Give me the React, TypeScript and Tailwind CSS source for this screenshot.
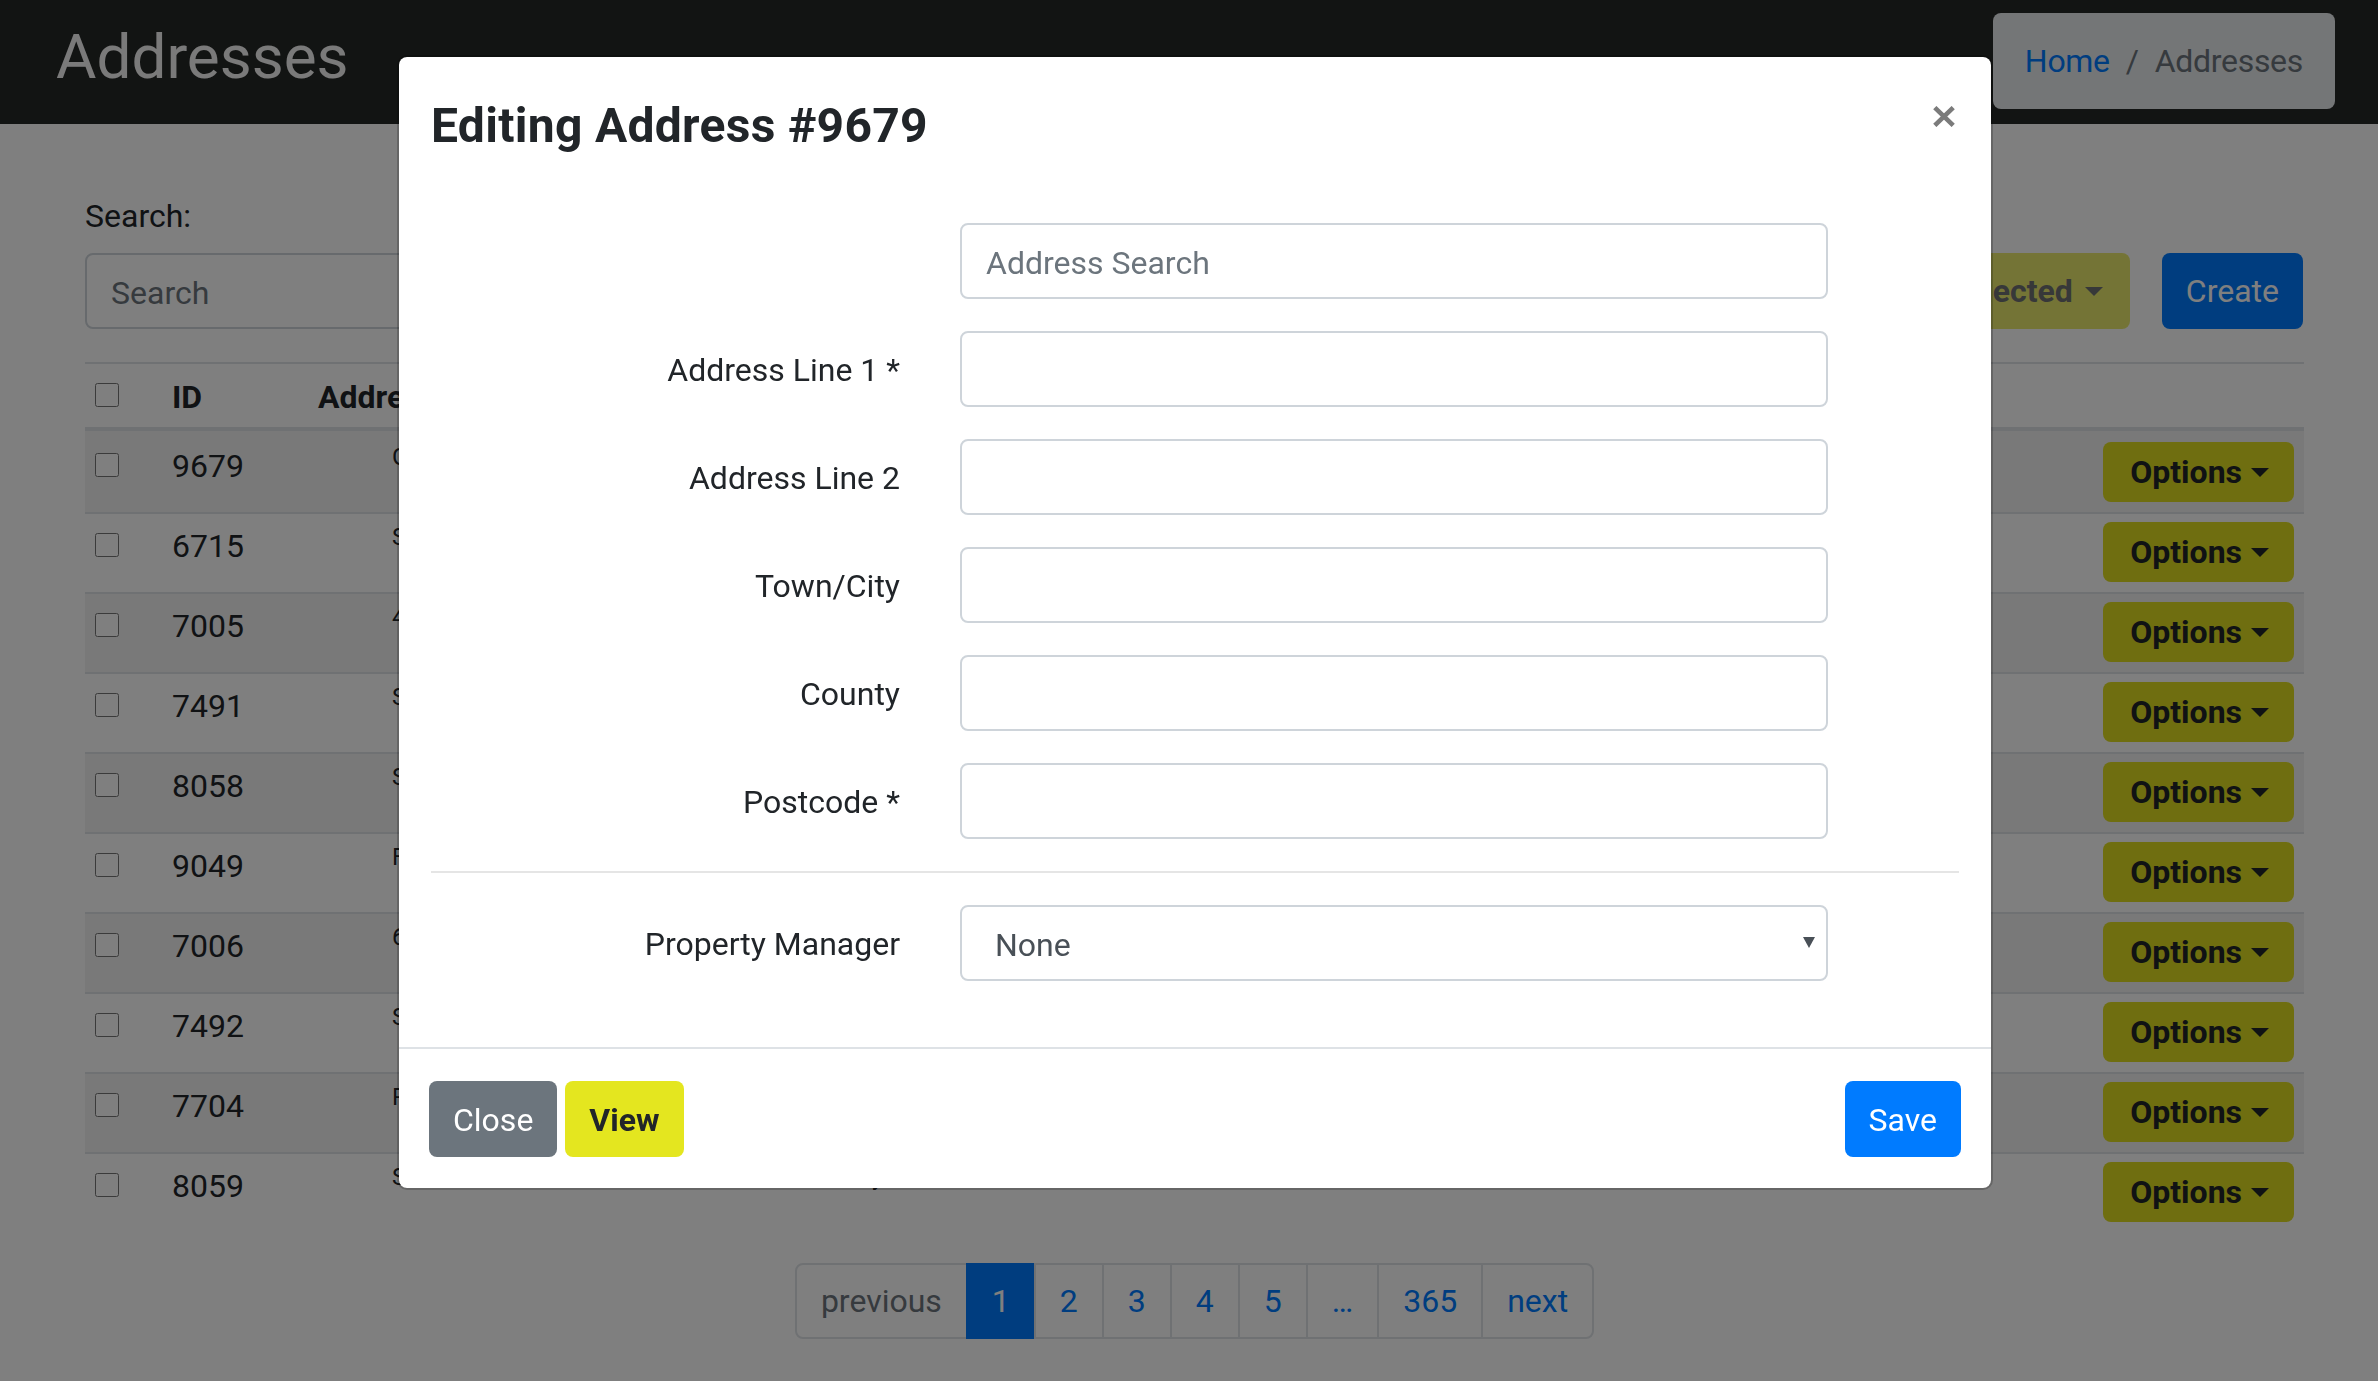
import React from "react"

type AddressRow = {
    id: number
    address: string
}

const rows: AddressRow[] = [
    { id: 9679, address: "Ground Floor Flat, 12 Elm Grove" },
    { id: 6715, address: "Sycamore House, Mill Lane" },
    { id: 7005, address: "4 Orchard Close, Bramley" },
    { id: 7491, address: "Station Road, Unit 3" },
    { id: 8058, address: "Station Road, Unit 9" },
    { id: 9049, address: "Flat 2, 88 High Street" },
    { id: 7006, address: "6 Orchard Close, Bramley" },
    { id: 7492, address: "Station Road, Unit 4" },
    { id: 7704, address: "Rose Cottage, Church Walk" },
    { id: 8059, address: "Station Road Business Park, Unit 10, Westbury, Wiltshire, BA13 4JY" },
]

const pages = ["2", "3", "4", "5", "…", "365"]

const fields = ["Address Line 1 *", "Address Line 2", "Town/City", "County", "Postcode *"]

function Caret() {
    return (
        <svg width="18" height="9" viewBox="0 0 18 9" className="shrink-0">
            <path d="M0 0h18L9 9z" fill="currentColor" />
        </svg>
    )
}

export default function App() {
    return (
        <div className="relative min-h-[1381px] bg-white font-['Roboto','Liberation_Sans',sans-serif] text-[32px] leading-[48px] text-[#212529]">
            <header className="flex h-[124px] items-start justify-between bg-[#252826] pl-[56px] pr-[43px]">
                <h1 className="mt-[20px] text-[62px] font-normal leading-[1.2] text-[#f5f5f5]">Addresses</h1>
                <nav className="mt-[13px] flex h-[96px] items-center rounded-[8px] bg-[#e9ecef] px-[32px] tracking-[-0.3px]">
                    <a className="text-[#007bff]">Home</a>
                    <span className="px-[16px] text-[#6c757d]">/</span>
                    <span className="text-[#6c757d]">Addresses</span>
                </nav>
            </header>

            <main className="pl-[85px] pr-[74px] pt-[68px]">
                <div className="flex items-end justify-between">
                    <div>
                        <label className="mb-[13px] block">Search:</label>
                        <input placeholder="Search" className="h-[76px] w-[760px] rounded-[8px] border-2 border-[#ced4da] px-[24px] pt-[3px] placeholder:text-[#6c757d]" />
                    </div>
                    <div className="flex gap-[32px] pr-[1px]">
                        <button className="flex h-[76px] items-center gap-[12px] rounded-[8px] bg-[#dedc20] pl-[24px] pr-[27px] font-bold opacity-65">
                            With Selected <Caret />
                        </button>
                        <button className="h-[76px] rounded-[8px] bg-[#007bff] px-[24px] text-white">Create</button>
                    </div>
                </div>

                <table className="mt-[33px] w-full table-fixed border-separate border-spacing-0">
                    <colgroup>
                        <col className="w-[77px]" />
                        <col className="w-[146px]" />
                        <col />
                        <col className="w-[217px]" />
                    </colgroup>
                    <thead>
                        <tr>
                            <th className="border-t-2 border-b-4 border-[#dee2e6] px-[10px] pt-[9px] pb-[6px] text-left align-top">
                                <input type="checkbox" className="mt-[10px] block h-[24px] w-[24px]" />
                            </th>
                            <th className="border-t-2 border-b-4 border-[#dee2e6] px-[10px] pt-[9px] pb-[6px] text-left align-top font-bold">ID</th>
                            <th className="border-t-2 border-b-4 border-[#dee2e6] px-[10px] pt-[9px] pb-[6px] text-left align-top font-bold">Address</th>
                            <th className="border-t-2 border-b-4 border-[#dee2e6] px-[10px] pt-[9px] pb-[6px]"></th>
                        </tr>
                    </thead>
                    <tbody>
                        {rows.map((row, i) => (
                            <tr key={row.id} className={i % 2 === 0 ? "bg-[#f2f2f2]" : ""}>
                                <td className={i === 0 ? "px-[10px] pt-[11px] pb-[10px] align-top" : "border-t-2 border-[#dee2e6] px-[10px] pt-[8px] pb-[10px] align-top"}>
                                    <input type="checkbox" className="mt-[11px] block h-[24px] w-[24px]" />
                                </td>
                                <td className={i === 0 ? "px-[10px] pt-[11px] pb-[10px] align-top" : "border-t-2 border-[#dee2e6] px-[10px] pt-[8px] pb-[10px] align-top"}>
                                    {row.id}
                                </td>
                                <td className={i === 0 ? "truncate pl-[84px] pr-[10px] pt-[11px] pb-[10px] align-top text-[24px] leading-[30px]" : "truncate border-t-2 border-[#dee2e6] pl-[84px] pr-[10px] pt-[8px] pb-[10px] align-top text-[24px] leading-[30px]"}>
                                    {row.address}
                                </td>
                                <td className={i === 0 ? "px-[10px] pt-[11px] pb-[10px] text-right align-top" : "border-t-2 border-[#dee2e6] px-[10px] pt-[8px] pb-[10px] text-right align-top"}>
                                    <button className="inline-flex h-[60px] items-center gap-[9px] rounded-[8px] bg-[#dedc20] pl-[27px] pr-[25px] font-bold">
                                        Options <Caret />
                                    </button>
                                </td>
                            </tr>
                        ))}
                    </tbody>
                </table>

                <nav className="mt-[31px] flex justify-center">
                    <ul className="flex leading-[40px]">
                        <li>
                            <span className="block rounded-l-[8px] border-2 border-[#dee2e6] px-[24px] py-[16px] text-[#6c757d]">previous</span>
                        </li>
                        <li className="-ml-[2px]">
                            <span className="block border-2 border-[#007bff] bg-[#007bff] px-[24px] py-[16px] text-white">1</span>
                        </li>
                        {pages.map(p => (
                            <li key={p} className="-ml-[2px]">
                                <a className="block border-2 border-[#dee2e6] px-[24px] py-[16px] text-[#007bff]">{p}</a>
                            </li>
                        ))}
                        <li className="-ml-[2px]">
                            <a className="block rounded-r-[8px] border-2 border-[#dee2e6] px-[24px] py-[16px] text-[#007bff]">next</a>
                        </li>
                    </ul>
                </nav>
            </main>

            {/* modal backdrop + dialog */}
            <div className="fixed inset-0 bg-black/50">
                <div className="ml-[397px] mt-[55px] w-[1596px] rounded-[10px] border-2 border-black/20 bg-white bg-clip-padding">
                    <div className="flex items-start px-[32px] pt-[34px] pb-[30px]">
                        <h5 className="text-[48px] font-bold leading-[70px] tracking-[0.3px]">Editing Address #9679</h5>
                        <button className="ml-auto mr-[4px] mt-[15px] text-[#7b7b7b]">
                            <svg width="22" height="21" viewBox="0 0 22 21">
                                <path d="M1.8 1.6L20.2 19.4M20.2 1.6L1.8 19.4" stroke="currentColor" strokeWidth="4.6" />
                            </svg>
                        </button>
                    </div>

                    <div className="px-[32px] pt-[32px] pb-[34px]">
                        <div className="mb-[32px] flex items-center">
                            <div className="w-[469px]" />
                            <input placeholder="Address Search" className="ml-[60px] h-[76px] w-[868px] rounded-[8px] border-2 border-[#ced4da] px-[24px] pt-[3px] text-[#495057] placeholder:text-[#6c757d]" />
                        </div>
                        {fields.map(f => (
                            <div key={f} className="mb-[32px] flex items-center">
                                <label className="w-[469px] pt-[2px] text-right">{f}</label>
                                <input className="ml-[60px] h-[76px] w-[868px] rounded-[8px] border-2 border-[#ced4da] px-[24px] text-[#495057]" />
                            </div>
                        ))}
                        <hr className="mb-[32px] border-t-2 border-black/10" />
                        <div className="mb-[32px] flex items-center">
                            <label className="w-[469px] pt-[2px] text-right">Property Manager</label>
                            <div className="relative ml-[60px] w-[868px]">
                                <select className="h-[76px] w-full appearance-none rounded-[8px] border-2 border-[#ced4da] bg-white pl-[33px] pr-[48px] pt-[3px] text-[#495057]">
                                    <option>None</option>
                                </select>
                                <svg width="12" height="11" viewBox="0 0 12 11" className="pointer-events-none absolute right-[13px] top-[32px] text-[#495057]">
                                    <path d="M0 0h12L6 11z" fill="currentColor" />
                                </svg>
                            </div>
                        </div>
                    </div>

                    <div className="flex items-center gap-[8px] border-t-2 border-[#dee2e6] px-[30px] pt-[32px] pb-[31px]">
                        <button className="h-[76px] rounded-[8px] bg-[#6c757d] px-[24px] pt-[2px] text-white">Close</button>
                        <button className="h-[76px] rounded-[8px] bg-[#e4e61f] px-[24px] pt-[2px] font-bold">View</button>
                        <button className="ml-auto h-[76px] rounded-[8px] bg-[#007bff] px-[24px] pt-[2px] text-white">Save</button>
                    </div>
                </div>
            </div>
        </div>
    )
}
